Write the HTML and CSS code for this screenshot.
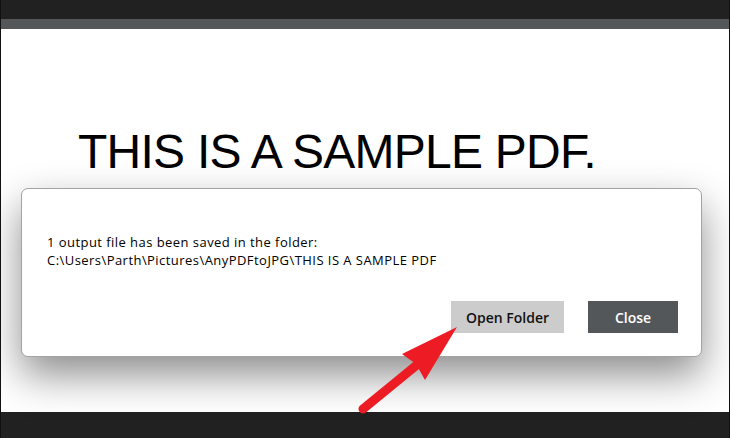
FILE: index.html
```html
<!DOCTYPE html>
<html lang="en">

<head>
    <meta charset="UTF-8">
    <meta name="viewport" content="width=device-width, initial-scale=1.0">
    <title>AnyPDFtoJPG</title>
    <link rel="stylesheet" href="styles.css">
</head>

<body>
    <div class="window">
        <div class="titlebar"></div>
        <div class="toolbar"></div>

        <div class="page">
            <h1 class="sample">THIS IS A SAMPLE PDF.</h1>

            <!-- save result dialog -->
            <div class="dialog">
                <p class="message">
                    1 output file has been saved in the folder:<br>
                    C:\Users\Parth\Pictures\AnyPDFtoJPG\THIS IS A SAMPLE PDF
                </p>
                <div class="actions">
                    <button class="btn btn-light">Open Folder</button>
                    <button class="btn btn-dark">Close</button>
                </div>
            </div>
        </div>

        <div class="bottombar"></div>

        <svg class="arrow" width="730" height="438" viewBox="0 0 730 438">
            <line x1="363" y1="409" x2="418" y2="364" stroke="#ed1c24" stroke-width="9" stroke-linecap="round" />
            <polygon points="457,327 402,354 416,364 425,380" fill="#ed1c24" />
        </svg>
    </div>
</body>

</html>
```

FILE: styles.css
```css
* {
    padding: 0;
    margin: 0;
    box-sizing: border-box;
}

body {
    background: #fff;
}

div.window {
    position: relative;
    width: 730px;
    height: 438px;
    display: flex;
    flex-direction: column;
    border-left: 1px solid #111;
    border-right: 1px solid #111;
    overflow: hidden;
}

div.titlebar {
    height: 19px;
    background: #212121;
}

div.toolbar {
    height: 10px;
    background: #53575a;
}

div.page {
    position: relative;
    flex: 1;
    background: #fff;
}

h1.sample {
    margin-top: 98px;
    padding-left: 77px;
    font-family: "Liberation Sans", Arial, sans-serif;
    font-weight: normal;
    font-size: 48px;
    line-height: 50px;
    letter-spacing: -0.75px;
    color: #000;
}

div.dialog {
    position: absolute;
    left: 20px;
    top: 159px;
    width: 681px;
    height: 169px;
    display: flex;
    flex-direction: column;
    padding: 44px 23px 23px 25px;
    background: #fff;
    border: 1px solid #a3a3a3;
    border-radius: 7px;
    box-shadow: 0 18px 40px rgba(0, 0, 0, 0.45);
}

p.message {
    font-family: "Open Sans", "Noto Sans", sans-serif;
    font-size: 13px;
    line-height: 18px;
    letter-spacing: 0.45px;
    color: #000;
}

div.actions {
    display: flex;
    justify-content: flex-end;
    gap: 24px;
    margin-top: auto;
}

.btn {
    height: 32px;
    border: none;
    font-family: "Open Sans", "Noto Sans", sans-serif;
    font-size: 14px;
    font-weight: 600;
}

.btn-light {
    width: 113px;
    background: #cccccc;
    color: #111;
}

.btn-dark {
    width: 90px;
    background: #53575a;
    color: #fff;
}

div.bottombar {
    height: 26px;
    background: #212121;
}

svg.arrow {
    position: absolute;
    left: -1px;
    top: 0;
    pointer-events: none;
}
```
